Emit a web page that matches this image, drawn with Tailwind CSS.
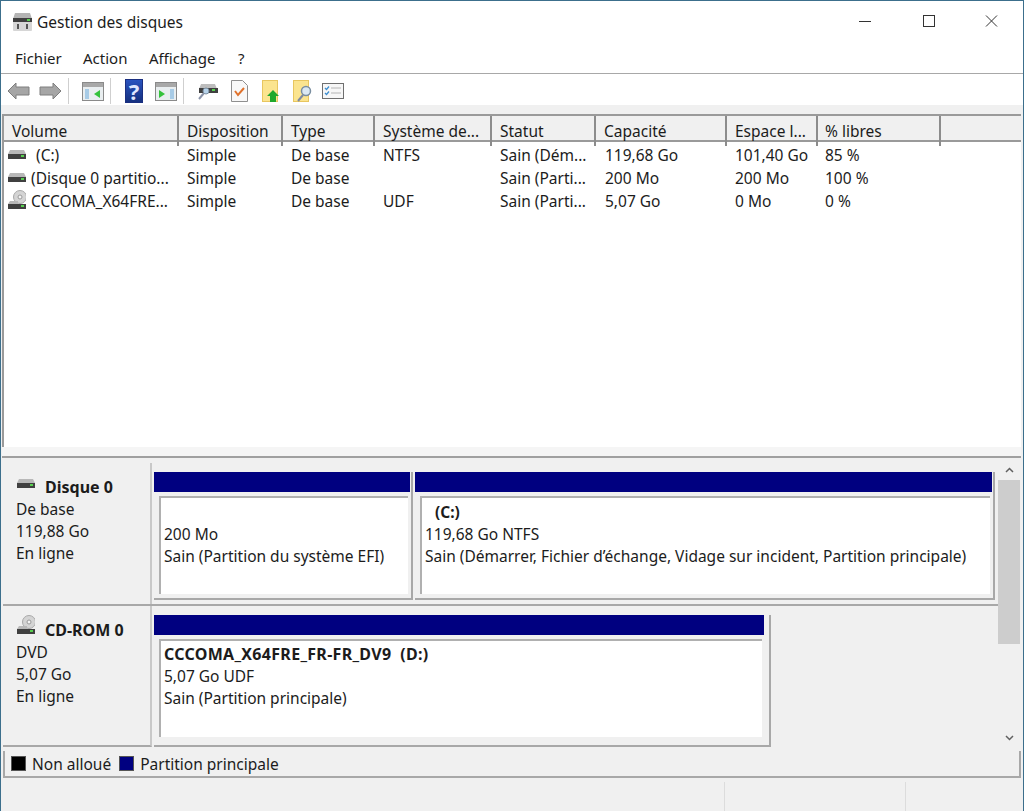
<!DOCTYPE html>
<html lang="fr">

<head>
    <meta charset="UTF-8">
    <title>Gestion des disques</title>
    <script src="https://cdn.jsdelivr.net/npm/@tailwindcss/browser@4"></script>
</head>

<body class="bg-[#f0f0f0]">
    <div class="w-[1024px] h-[811px] overflow-hidden flex flex-col border-x border-t border-[#3c6f8c] bg-[#f0f0f0] text-[15.5px] leading-[22px] text-[#1c1c1c] font-['Noto_Sans',sans-serif]">

        <!-- title bar -->
        <div class="h-[43px] shrink-0 bg-white flex items-center pl-[11px] pb-[2px]">
            <svg class="w-[21px] h-[20px]" viewBox="0 0 21 20">
                <path d="M3 1h15l2 6H1z" fill="#b4b4b4" />
                <rect x="1" y="6" width="19" height="4" fill="#3f3f3f" />
                <rect x="15" y="7" width="3" height="2" fill="#57d04f" />
                <path d="M1 10h19v8a1 1 0 0 1-1 1H2a1 1 0 0 1-1-1z" fill="#d6d6d6" />
                <rect x="5" y="12" width="2" height="5" fill="#555" />
                <rect x="14" y="12" width="2" height="5" fill="#555" />
            </svg>
            <span class="ml-[4px]">Gestion des disques</span>
            <div class="ml-auto flex items-center">
                <svg class="w-[13px] h-[13px] mr-[50px]" viewBox="0 0 13 13"><path d="M0 6.500h12" stroke="#333" /></svg>
                <svg class="w-[13px] h-[13px] mr-[50px]" viewBox="0 0 13 13"><rect x="1.500" y="0.500" width="11" height="11" fill="none" stroke="#333" /></svg>
                <svg class="w-[13px] h-[13px] mr-[25px]" viewBox="0 0 13 13"><path d="M1 0.500l11 11M12 0.500l-11 11" stroke="#333" /></svg>
            </div>
        </div>

        <!-- menu -->
        <div class="h-[30px] shrink-0 bg-white flex items-center pl-[14px] pb-[2px] text-[15px] border-b border-[#a8a8a8]">
            <span class="w-[68px]">Fichier</span>
            <span class="w-[66px]">Action</span>
            <span class="w-[89px]">Affichage</span>
            <span>?</span>
        </div>

        <!-- toolbar -->
        <div class="h-[31px] shrink-0 bg-white flex items-center pl-[6px] pt-[3px]">
            <svg class="w-[23px] h-[18px]" viewBox="0 0 23 18"><path d="M1 9l8-8v4h13v8H9v4z" fill="#a6a6a6" stroke="#7e7e7e" /></svg>
            <svg class="w-[23px] h-[18px] ml-[9px]" viewBox="0 0 23 18"><path d="M22 9l-8-8v4H1v8h13v4z" fill="#a6a6a6" stroke="#7e7e7e" /></svg>
            <div class="w-px h-[26px] bg-[#cfcfcf] ml-[6px]"></div>
            <svg class="w-[22px] h-[19px] ml-[13px]" viewBox="0 0 22 19">
                <rect x="0.500" y="0.500" width="21" height="18" fill="#e9eef0" stroke="#8a8a8a" />
                <rect x="1" y="1" width="20" height="4" fill="#a8a8a8" />
                <rect x="3" y="7" width="4" height="10" fill="#a7cbe6" />
                <path d="M18 8v8l-6-4z" fill="#35c23c" />
            </svg>
            <div class="w-px h-[26px] bg-[#cfcfcf] ml-[6px]"></div>
            <div class="w-[18px] h-[24px] ml-[14px] bg-linear-to-b from-[#2a54c0] to-[#15307f] flex items-center justify-center text-[#dfe6ff] font-bold text-[22px] border border-[#1a2f80]">?</div>
            <svg class="w-[22px] h-[19px] ml-[12px]" viewBox="0 0 22 19">
                <rect x="0.500" y="0.500" width="21" height="18" fill="#e9eef0" stroke="#8a8a8a" />
                <rect x="1" y="1" width="20" height="4" fill="#a8a8a8" />
                <rect x="15" y="7" width="4" height="10" fill="#a7cbe6" />
                <path d="M4 8v8l6-4z" fill="#35c23c" />
            </svg>
            <div class="w-px h-[26px] bg-[#cfcfcf] ml-[6px]"></div>
            <svg class="w-[21px] h-[20px] ml-[13px]" viewBox="0 0 21 20">
                <path d="M4 3h14l2 5H2z" fill="#bdbdbd" />
                <rect x="2" y="7" width="19" height="5" fill="#404040" />
                <rect x="15" y="8" width="3" height="2" fill="#57d04f" />
                <circle cx="9" cy="10" r="3" fill="#b7d3ea" stroke="#7a8ea0" />
                <path d="M7 12l-5 6" stroke="#8a93a8" stroke-width="2" />
            </svg>
            <svg class="w-[17px] h-[22px] ml-[13px]" viewBox="0 0 17 22">
                <path d="M0.500 0.500h11l5 5v16h-16z" fill="#f8f8f8" stroke="#8f8f8f" />
                <path d="M4 11l3 4 6-7" fill="none" stroke="#e0722c" stroke-width="2" />
            </svg>
            <svg class="w-[18px] h-[22px] ml-[14px]" viewBox="0 0 18 22">
                <rect x="0.500" y="0.500" width="15" height="21" fill="#fbe48f" stroke="#e8c660" />
                <path d="M11 10l6 6h-3v6H8v-6H5z" fill="#1fa82c" />
            </svg>
            <svg class="w-[20px] h-[22px] ml-[13px]" viewBox="0 0 20 22">
                <rect x="0.500" y="0.500" width="15" height="21" fill="#fbe48f" stroke="#e8c660" />
                <circle cx="13" cy="11" r="4.500" fill="#dbe8f2" stroke="#7a8ea0" stroke-width="1.500" />
                <path d="M10 15l-5 6" stroke="#7f8aa0" stroke-width="2" />
            </svg>
            <svg class="w-[22px] h-[16px] ml-[9px]" viewBox="0 0 22 16">
                <rect x="0.500" y="0.500" width="21" height="15" fill="#f7f7f7" stroke="#6f6f6f" />
                <path d="M3 5l1.500 1.500L7 3.500M3 10l1.500 1.500L7 8.500" fill="none" stroke="#3d8ed0" stroke-width="1.300" />
                <path d="M9 5h10M9 10h10" stroke="#b5b5b5" />
            </svg>
        </div>

        <div class="h-[9px] shrink-0"></div>

        <!-- volume list -->
        <div class="ml-[1px] mr-[2px] h-[333px] shrink-0 flex flex-col bg-white border-l-2 border-t-2 border-[#9a9a9a] overflow-hidden">
            <div class="h-[26px] shrink-0 grid grid-cols-[175px_104px_92px_117px_104px_131px_91px_123px_1fr] bg-[#f0f0f0] border-b-2 border-[#9a9a9a]">
                <div class="pl-[8px] border-r-2 border-[#8c8c8c] leading-[30px]">Volume</div>
                <div class="pl-[8px] border-r-2 border-[#8c8c8c] leading-[30px]">Disposition</div>
                <div class="pl-[8px] border-r-2 border-[#8c8c8c] leading-[30px]">Type</div>
                <div class="pl-[8px] border-r-2 border-[#8c8c8c] leading-[30px] whitespace-nowrap">Système de...</div>
                <div class="pl-[8px] border-r-2 border-[#8c8c8c] leading-[30px]">Statut</div>
                <div class="pl-[8px] border-r-2 border-[#8c8c8c] leading-[30px]">Capacité</div>
                <div class="pl-[8px] border-r-2 border-[#8c8c8c] leading-[30px]">Espace l...</div>
                <div class="pl-[7px] border-r-2 border-[#8c8c8c] leading-[30px]">% libres</div>
                <div></div>
            </div>
            <div class="pt-[1px] grid grid-cols-[175px_104px_92px_117px_104px_131px_91px_123px_1fr] auto-rows-[23px] items-center whitespace-nowrap">
                <div class="flex items-center pl-[4px]">
                    <svg class="w-[18px] h-[10px]" viewBox="0 0 18 10"><path d="M2 0h14l2 4H0z" fill="#b8b8b8" /><rect y="4" width="18" height="5" fill="#404040" /><rect x="13" y="5" width="3" height="2" fill="#57d04f" /></svg>
                    <span class="ml-[10px]">(C:)</span>
                </div>
                <div class="pl-[8px]">Simple</div><div class="pl-[8px]">De base</div><div class="pl-[8px]">NTFS</div><div class="pl-[8px]">Sain (Dém...</div><div class="pl-[9px]">119,68 Go</div><div class="pl-[8px]">101,40 Go</div><div class="pl-[7px]">85 %</div><div></div>

                <div class="flex items-center pl-[4px]">
                    <svg class="w-[18px] h-[10px]" viewBox="0 0 18 10"><path d="M2 0h14l2 4H0z" fill="#b8b8b8" /><rect y="4" width="18" height="5" fill="#404040" /><rect x="13" y="5" width="3" height="2" fill="#57d04f" /></svg>
                    <span class="ml-[5px]">(Disque 0 partitio...</span>
                </div>
                <div class="pl-[8px]">Simple</div><div class="pl-[8px]">De base</div><div class="pl-[8px]"></div><div class="pl-[8px]">Sain (Parti...</div><div class="pl-[9px]">200 Mo</div><div class="pl-[8px]">200 Mo</div><div class="pl-[7px]">100 %</div><div></div>

                <div class="flex items-center pl-[4px]">
                    <svg class="w-[18px] h-[20px] mt-[-2px]" viewBox="0 0 18 20"><circle cx="12" cy="7" r="6.500" fill="#d4d4d4" stroke="#a8a8a8" /><circle cx="12" cy="7" r="2" fill="#f4f4f4" stroke="#9a9a9a" /><path d="M2 11h8v3H0z" fill="#b8b8b8" /><rect y="14" width="18" height="5" fill="#404040" /><rect x="13" y="15" width="3" height="2" fill="#57d04f" /></svg>
                    <span class="ml-[5px]">CCCOMA_X64FRE...</span>
                </div>
                <div class="pl-[8px]">Simple</div><div class="pl-[8px]">De base</div><div class="pl-[8px]">UDF</div><div class="pl-[8px]">Sain (Parti...</div><div class="pl-[9px]">5,07 Go</div><div class="pl-[8px]">0 Mo</div><div class="pl-[7px]">0 %</div><div></div>
            </div>
        </div>

        <!-- splitter -->
        <div class="mr-[2px] ml-[1px] h-[9px] shrink-0 bg-[#f5f5f5] border-b-2 border-[#a0a0a0] box-content"></div>

        <!-- disks -->
        <div class="h-[293px] shrink-0 ml-[2px] mr-[2px] flex">
            <div class="w-[995px] shrink-0 pt-[5px] flex flex-col">
                <div class="h-[143px] flex border-b-2 border-[#a8a8a8]">
                    <div class="w-[149px] shrink-0 border-r-2 border-[#c8c8c8] pl-[13px] pt-[13px]">
                        <div class="flex items-center font-bold text-[16px]">
                            <svg class="w-[18px] h-[10px] mr-[10px] mt-[-6px] ml-[1px]" viewBox="0 0 18 10"><path d="M2 0h14l2 4H0z" fill="#b8b8b8" /><rect y="4" width="18" height="5" fill="#404040" /><rect x="13" y="5" width="3" height="2" fill="#57d04f" /></svg>
                            <span>Disque 0</span>
                        </div>
                        <div>De base</div>
                        <div>119,88 Go</div>
                        <div>En ligne</div>
                    </div>
                    <div class="pl-[2px] pt-[9px] flex gap-[2px]">
                        <div class="w-[259px] h-[128px] border-r-2 border-b-2 border-[#a8a8a8] pr-[1px]">
                            <div class="h-[20px] bg-[#000080]"></div>
                            <div class="ml-[5px] mt-[4px] h-[98px] mr-[2px] bg-white border-l-2 border-t-2 border-[#b0b0b0] pl-[3px] pt-[3px] whitespace-nowrap">
                                <div>&nbsp;</div>
                                <div>200 Mo</div>
                                <div>Sain (Partition du système EFI)</div>
                            </div>
                        </div>
                        <div class="w-[580px] h-[128px] border-r-2 border-b-2 border-[#a8a8a8] pr-[1px]">
                            <div class="h-[20px] bg-[#000080]"></div>
                            <div class="ml-[5px] mt-[4px] h-[98px] mr-[2px] bg-white border-l-2 border-t-2 border-[#b0b0b0] pl-[3px] pt-[3px] whitespace-nowrap">
                                <div class="font-bold pl-[10px]">(C:)</div>
                                <div>119,68 Go NTFS</div>
                                <div>Sain (Démarrer, Fichier d’échange, Vidage sur incident, Partition principale)</div>
                            </div>
                        </div>
                    </div>
                </div>
                <div class="h-[143px] flex border-b-2 border-transparent">
                    <div class="w-[149px] shrink-0 border-r-2 border-[#c8c8c8] border-b-2 border-b-[#a8a8a8] pl-[13px] pt-[13px]">
                        <div class="flex items-center font-bold text-[16px]">
                            <svg class="w-[18px] h-[20px] mr-[10px] mt-[-10px] ml-[1px]" viewBox="0 0 18 20"><circle cx="12" cy="7" r="6.500" fill="#d4d4d4" stroke="#a8a8a8" /><circle cx="12" cy="7" r="2" fill="#f4f4f4" stroke="#9a9a9a" /><path d="M2 11h8v3H0z" fill="#b8b8b8" /><rect y="14" width="18" height="5" fill="#404040" /><rect x="13" y="15" width="3" height="2" fill="#57d04f" /></svg>
                            <span>CD-ROM 0</span>
                        </div>
                        <div>DVD</div>
                        <div>5,07 Go</div>
                        <div>En ligne</div>
                    </div>
                    <div class="pl-[2px] pt-[9px]">
                        <div class="w-[617px] h-[132px] border-r-2 border-b-2 border-[#a8a8a8] pr-[5px]">
                            <div class="h-[20px] bg-[#000080]"></div>
                            <div class="ml-[5px] mt-[4px] h-[98px] mr-[2px] bg-white border-l-2 border-t-2 border-[#b0b0b0] pl-[3px] pt-[2px] whitespace-nowrap">
                                <div class="font-bold text-[16px] tracking-[0.3px]">CCCOMA_X64FRE_FR-FR_DV9&nbsp; (D:)</div>
                                <div>5,07 Go UDF</div>
                                <div>Sain (Partition principale)</div>
                            </div>
                        </div>
                    </div>
                </div>
            </div>

            <!-- scrollbar -->
            <div class="w-[22px] shrink-0 flex flex-col items-center bg-[#f0f0f0]">
                <div class="h-[20px] w-full flex items-center justify-center mt-[2px]">
                    <svg class="w-[9px] h-[6px]" viewBox="0 0 9 6"><path d="M1 5l3.500-3.500L8 5" fill="none" stroke="#606060" stroke-width="1.500" /></svg>
                </div>
                <div class="h-[164px] w-full bg-[#cdcdcd]"></div>
                <div class="mt-auto mb-[3px] h-[20px] w-full flex items-center justify-center">
                    <svg class="w-[9px] h-[6px]" viewBox="0 0 9 6"><path d="M1 1l3.500 3.500L8 1" fill="none" stroke="#606060" stroke-width="1.500" /></svg>
                </div>
            </div>
        </div>

        <!-- legend -->
        <div class="h-[27px] shrink-0 ml-[2px] mr-[2px] flex items-center pl-[6px] border-l-2 border-b-2 border-r-2 border-[#a8a8a8]">
            <div class="w-[15px] h-[15px] bg-black border border-[#555]"></div>
            <span class="ml-[6px]">Non alloué</span>
            <div class="w-[15px] h-[15px] bg-[#000080] ml-[8px] border border-[#555]"></div>
            <span class="ml-[6px]">Partition principale</span>
        </div>

        <!-- status bar -->
        <div class="mt-[4px] h-[33px] flex justify-end">
            <div class="w-[181px] border-l border-[#dcdcdc]"></div>
            <div class="w-[118px] border-l border-[#dcdcdc]"></div>
        </div>
    </div>
</body>

</html>
